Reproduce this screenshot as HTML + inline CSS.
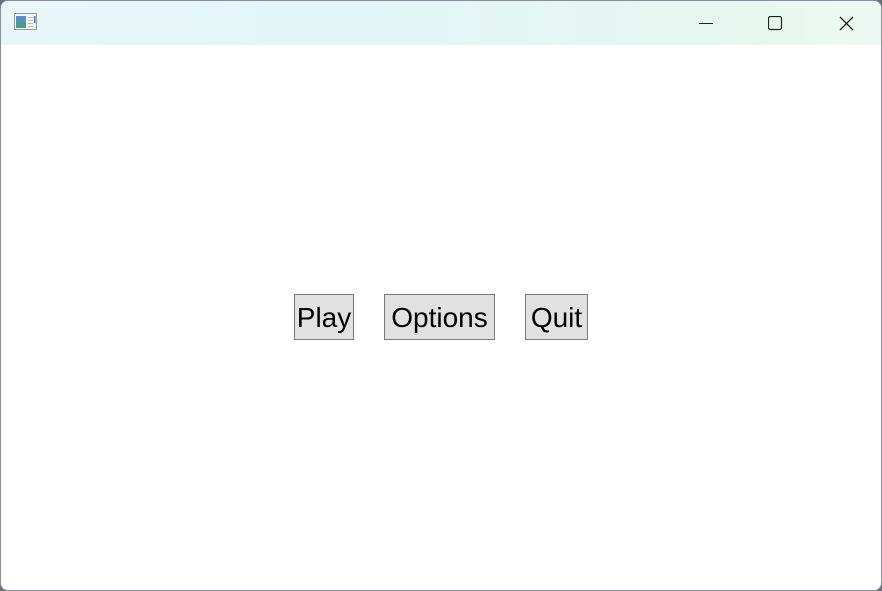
<!DOCTYPE html>
<html><head><style>
html,body{margin:0;padding:0;width:882px;height:591px;overflow:hidden;background:#6b6f7a;}
.win{position:absolute;left:0;top:0;width:880px;height:589px;background:#fff;border:1px solid #8a8f99;border-radius:8px;overflow:hidden;}
.tb{position:absolute;left:0;top:0;width:880px;height:44px;background:linear-gradient(90deg,#e8f6f8 0%,#e3f5f7 40%,#e6f6f0 80%,#eef8f2 100%);}
.btn{position:absolute;top:293px;background:#e1e1e1;border:1px solid #7a7a7a;box-sizing:border-box;height:46px;font-family:"Liberation Sans",sans-serif;font-size:28px;line-height:46px;text-align:center;color:#000;}
</style></head><body>
<div class="win">
<div class="tb">
<svg style="position:absolute;left:13px;top:12px" width="24" height="18" viewBox="0 0 24 18">
<rect x="0.5" y="0.5" width="22" height="16" fill="#f4f4f4" stroke="#999"/>
<rect x="2" y="3" width="10" height="12" fill="#4a9a8a"/>
<rect x="2" y="3" width="10" height="6" fill="#5a8fbf"/>
<rect x="14" y="4" width="5" height="1" fill="#bbb"/><rect x="14" y="7" width="5" height="1" fill="#bbb"/><rect x="14" y="10" width="5" height="1" fill="#bbb"/><rect x="14" y="13" width="5" height="1" fill="#bbb"/>
<rect x="20" y="3" width="1.5" height="7" fill="#3a7ac0"/>
</svg>
<svg style="position:absolute;left:698px;top:22px" width="14" height="2"><rect width="14" height="1" fill="#222"/></svg>
<svg style="position:absolute;left:767px;top:15px" width="15" height="15"><rect x="0.5" y="0.5" width="13" height="13" rx="2" fill="none" stroke="#222" stroke-width="1.2"/></svg>
<svg style="position:absolute;left:838px;top:15px" width="15" height="15"><path d="M1 1L14 14M14 1L1 14" stroke="#222" stroke-width="1.3"/></svg>
</div>
<div class="btn" style="left:293px;width:60px">Play</div>
<div class="btn" style="left:383px;width:111px">Options</div>
<div class="btn" style="left:524px;width:63px">Quit</div>
</div>
</body></html>
